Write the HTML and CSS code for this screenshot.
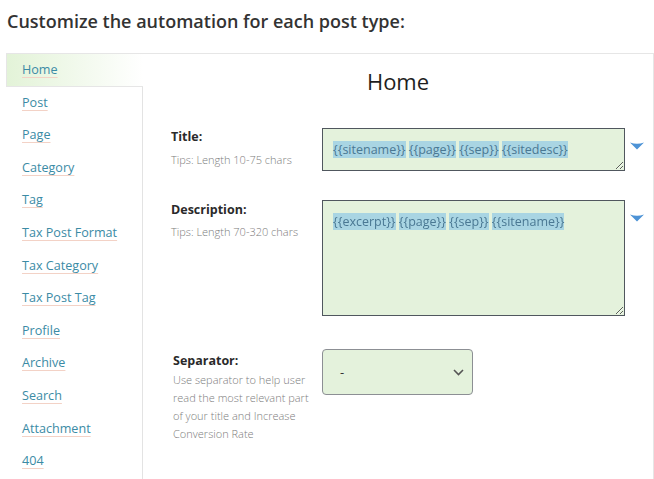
FILE: index.html
```html
<!DOCTYPE html>
<html>
<head>
  <title>Automation</title>
  <link rel="stylesheet" href="styles.css">
</head>
<body>

  <h2 class="page-title">Customize the automation for each post type:</h2>

  <div class="panel">

    <ul class="tabs">
      <li class="active"><a href="#">Home</a></li>
      <li><a href="#">Post</a></li>
      <li><a href="#">Page</a></li>
      <li><a href="#">Category</a></li>
      <li><a href="#">Tag</a></li>
      <li><a href="#">Tax Post Format</a></li>
      <li><a href="#">Tax Category</a></li>
      <li><a href="#">Tax Post Tag</a></li>
      <li><a href="#">Profile</a></li>
      <li><a href="#">Archive</a></li>
      <li><a href="#">Search</a></li>
      <li><a href="#">Attachment</a></li>
      <li><a href="#">404</a></li>
    </ul>

    <div class="content">
      <h3>Home</h3>

      <div class="row row-title">
        <div class="label">
          <strong>Title:</strong>
          <span class="tip">Tips: Length 10-75 chars</span>
        </div>
        <div class="field field-short">
          <span class="tok">{{sitename}}</span> <span class="tok">{{page}}</span> <span class="tok">{{sep}}</span> <span class="tok">{{sitedesc}}</span>
        </div>
        <svg class="arrow" width="14" height="8" viewBox="0 0 14 8"><path d="M0 0.5 Q7 3 14 0.5 L7 7.5 Z" fill="#4d93d6"/></svg>
      </div>

      <div class="row row-desc">
        <div class="label">
          <strong>Description:</strong>
          <span class="tip">Tips: Length 70-320 chars</span>
        </div>
        <div class="field field-tall">
          <span class="tok">{{excerpt}}</span> <span class="tok">{{page}}</span> <span class="tok">{{sep}}</span> <span class="tok">{{sitename}}</span>
        </div>
        <svg class="arrow" width="14" height="8" viewBox="0 0 14 8"><path d="M0 0.5 Q7 3 14 0.5 L7 7.5 Z" fill="#4d93d6"/></svg>
      </div>

      <div class="row row-sep">
        <div class="label">
          <strong>Separator:</strong>
          <span class="tip">Use separator to help user read the most relevant part of your title and Increase Conversion Rate</span>
        </div>
        <div class="select">
          <span>-</span>
          <svg width="11" height="7" viewBox="0 0 11 7"><path d="M1 1 L5.5 5.5 L10 1" fill="none" stroke="#555" stroke-width="1.6"/></svg>
        </div>
      </div>
    </div>

  </div>

</body>
</html>
```

FILE: styles.css
```css
body {
  margin: 0;
  font-family: 'Open Sans', sans-serif;
  background: #fff;
  color: #222;
}

.page-title {
  margin: 0;
  padding: 8px 7px 0;
  font-size: 18px;
  font-weight: 600;
  line-height: 26px;
  color: #333;
}

.panel {
  display: flex;
  margin: 19px 0 0 6px;
  border-top: 1px solid #e6e6e6;
  border-right: 1px solid #e6e6e6;
  height: 440px;
}

.tabs {
  list-style: none;
  margin: 0;
  padding: 0;
  width: 136px;
  border-right: 1px solid #e3e3e3;
}

.tabs li {
  padding: 7px 15px 7px 16px;
  line-height: 18.6px;
  font-size: 12.6px;
}

.tabs li.active {
  margin: -1px -1px 0 0;
  border: 1px solid #e6e6e6;
  border-right: none;
  padding: 7px 15px 6px;
  background: linear-gradient(to right, #e3f3d8, #ffffff);
}

.tabs a {
  color: #3b8ba5;
  text-decoration: underline;
  text-decoration-color: #f3d2c6;
  text-underline-offset: 3px;
}

.content {
  flex: 1;
  padding: 0 0 0 28px;
}

.content h3 {
  margin: 12px 0 0 -28px;
  text-align: center;
  font-size: 22px;
  font-weight: 400;
  line-height: 30px;
  color: #1e1e1e;
}

.row {
  display: flex;
  align-items: flex-start;
}

.label {
  width: 151px;
  flex: none;
}

.label strong {
  display: block;
  font-size: 12.5px;
  font-weight: 700;
  line-height: 18px;
  color: #2a2a2a;
}

.tip {
  display: block;
  font-size: 11px;
  font-weight: 300;
  line-height: 18px;
  color: #7d7d7d;
}

.row-title { margin-top: 32px; }
.row-title .tip { margin-top: 5px; }

.row-desc { margin-top: 29px; }
.row-desc .label { padding-top: 1px; }
.row-desc .tip { margin-top: 4px; }

.row-sep { margin-top: 33px; }
.row-sep .label { padding: 3px 0 0 2px; width: 149px; }
.row-sep .tip { margin-top: 1px; width: 142px; }

.field {
  box-sizing: border-box;
  width: 303px;
  padding: 11px 10px;
  border: 1px solid #50575e;
  background: #e4f2dc;
  font-size: 12.5px;
  line-height: 20px;
  color: #4a7893;
  resize: vertical;
  overflow: auto;
}

.field-short { height: 43px; }
.field-tall { height: 116px; }

.tok {
  background: #a9d5e3;
}

.arrow {
  margin: 14px 0 0 5px;
}

.select {
  box-sizing: border-box;
  width: 151px;
  height: 46px;
  display: flex;
  align-items: center;
  justify-content: space-between;
  padding: 0 8px 0 17px;
  border: 1px solid #8c8f94;
  border-radius: 4px;
  background: #e4f2dc;
  font-size: 13px;
  color: #333;
}
```
